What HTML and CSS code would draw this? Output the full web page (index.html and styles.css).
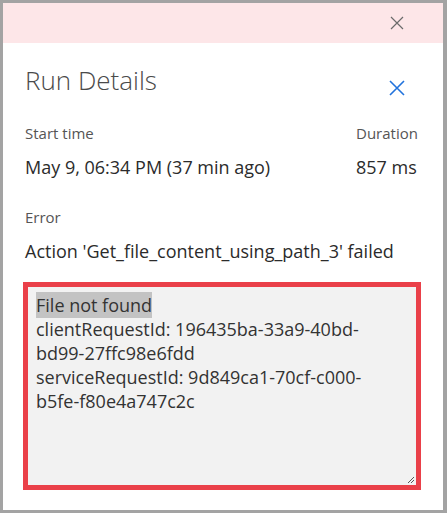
FILE: index.html
```html
<!DOCTYPE html>
<html>
<head>
<meta charset="utf-8">
<link rel="stylesheet" href="styles.css">
</head>
<body>
<div class="frame">
  <div class="topbar">
    <svg class="close-top" width="14" height="14" viewBox="0 0 14 14"><path d="M1 1L13 13M13 1L1 13" stroke="#6b6b6b" stroke-width="1.2" fill="none"/></svg>
  </div>
  <div class="panel">
    <div class="header">
      <h1 class="title">Run Details</h1>
      <svg class="close-blue" width="16" height="16" viewBox="0 0 16 16"><path d="M1 1L15 15M15 1L1 15" stroke="#2273dc" stroke-width="1.6" fill="none"/></svg>
    </div>
    <div class="row">
      <div class="col-main">
        <div class="label">Start time</div>
        <div class="value">May 9, 06:34 PM (37 min ago)</div>
      </div>
      <div class="col-side">
        <div class="label">Duration</div>
        <div class="value">857 ms</div>
      </div>
    </div>
    <div class="error">
      <div class="label">Error</div>
      <div class="value value-error">Action 'Get_file_content_using_path_3' failed</div>
    </div>
    <div class="box">
      <div class="box-text"><span class="sel">File not found</span><br>clientRequestId: 196435ba-33a9-40bd-<br>bd99-27ffc98e6fdd<br>serviceRequestId: 9d849ca1-70cf-c000-<br>b5fe-f80e4a747c2c</div>
      <svg class="grip" width="8" height="8" viewBox="0 0 8 8"><path d="M1 7L7 1M4 7L7 4" stroke="#555" stroke-width="1" fill="none"/></svg>
    </div>
  </div>
</div>
</body>
</html>
```
FILE: styles.css
```css
html, body { margin: 0; padding: 0; }
body {
  background: #a3a3a3;
  width: 447px;
  height: 513px;
  overflow: hidden;
  font-family: "Open Sans", "Noto Sans", sans-serif;
}
.frame {
  margin: 3px 4px 0 3px;
  height: 507px;
  background: #fff;
  display: flex;
  flex-direction: column;
}
.topbar {
  height: 40px;
  background: #fde6e8;
  display: flex;
  align-items: center;
  justify-content: flex-end;
  padding-right: 39px;
}
.close-top { display: block; }
.panel {
  padding: 0 22px 0 22px;
  display: flex;
  flex-direction: column;
}
.header {
  display: flex;
  justify-content: space-between;
  align-items: center;
  margin-top: 19px;
  padding-right: 16px;
}
.title {
  margin: 0;
  font-weight: 300;
  font-size: 26px;
  color: #4a4a4a;
  line-height: 36px;
}
.close-blue { display: block; margin-top: 16px; }
.row {
  display: flex;
  margin-top: 25px;
}
.col-main { width: 331px; }
.col-side { flex: 1; }
.label {
  font-size: 15px;
  color: #555;
  line-height: 20px;
}
.value {
  font-size: 18px;
  color: #2b2b2b;
  line-height: 24px;
  margin-top: 12px;
}
.value-error { margin-top: 12px; }
.error { margin-top: 28px; }
.box {
  margin-top: 19px;
  margin-left: -2px;
  height: 188px;
  border: 5px solid #ea4049;
  background: #f2f2f2;
  position: relative;
  padding: 6px 8px 4px;
}
.box-text {
  font-size: 18px;
  line-height: 24px;
  color: #333;
}
.sel { background: #c3c3c3; padding: 1px 0; }
.grip { position: absolute; right: 1px; bottom: 1px; }
```
